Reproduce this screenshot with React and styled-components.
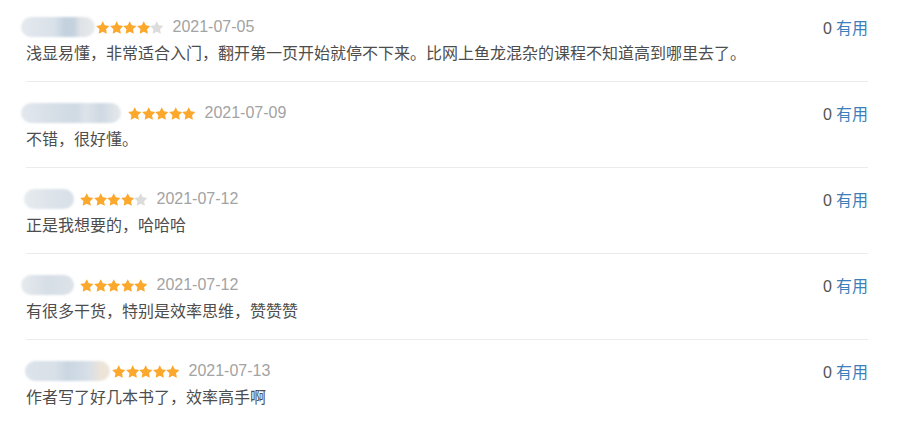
import styled, { createGlobalStyle } from "styled-components";

const GlobalStyle = createGlobalStyle`
  body {
    margin: 0;
    background: #fff;
    font-family: "Liberation Sans", Arial, "Noto Sans CJK SC", sans-serif;
  }
`;

const List = styled.div`
  width: 842px;
  margin-left: 26px;
`;

const Item = styled.div`
  padding: 18px 0 17px;
  border-bottom: 1px solid #ececec;

  &:first-child {
    padding-top: 14px;
  }

  &:last-child {
    border-bottom: none;
  }
`;

const Header = styled.div`
  display: flex;
  align-items: center;
  height: 26px;
`;

const Meta = styled.div`
  display: flex;
  align-items: center;
  flex: 1;
`;

const Name = styled.div`
  width: ${(p) => p.$w}px;
  height: 20px;
  margin-left: ${(p) => p.$offset}px;
  border-radius: 10px;
  background: ${(p) => p.$bg};
  filter: blur(1px);
`;

const Stars = styled.div`
  display: flex;
  margin-left: ${(p) => p.$gap}px;
`;

const DateText = styled.span`
  margin-left: 9px;
  font-size: 16px;
  color: #a3a3a3;
`;

const Useful = styled.div`
  font-size: 16px;
  color: #3d7fb8;

  b {
    font-weight: normal;
    color: #555;
    margin-right: 4px;
  }
`;

const Content = styled.div`
  font-family: "Noto Sans CJK SC", sans-serif;
  font-size: 16px;
  line-height: 24px;
  color: #4d4d4d;
`;

function Star({ on }) {
  return (
    <svg width="13.5" height="13" viewBox="2.3 1.3 19.4 18.5">
      <polygon
        points="12,1.5 14.94,7.45 21.51,8.41 16.76,13.05 17.88,19.59 12,16.5 6.12,19.59 7.24,13.05 2.49,8.41 9.06,7.45"
        fill={on ? "#fba82c" : "#dcdcdc"}
      />
    </svg>
  );
}

const reviews = [
  {
    name: { w: 74, offset: -5, gap: 1, bg: "linear-gradient(90deg,#e4e9ee 0%,#d9e1e9 45%,#c3d1de 60%,#c6d3df 72%,#e0e3e6 80%,#e7eaed 100%)" },
    stars: 4,
    date: "2021-07-05",
    text: "浅显易懂，非常适合入门，翻开第一页开始就停不下来。比网上鱼龙混杂的课程不知道高到哪里去了。",
  },
  {
    name: { w: 100, offset: -5, gap: 7, bg: "linear-gradient(90deg,#e3e8ee 0%,#d7dfe7 30%,#d0dae4 55%,#dde4ea 65%,#cfd9e3 80%,#e6e9ec 100%)" },
    stars: 5,
    date: "2021-07-09",
    text: "不错，很好懂。",
  },
  {
    name: { w: 50, offset: -2, gap: 6, bg: "linear-gradient(90deg,#e7ebef 0%,#dde4ea 50%,#d8e0e8 100%)" },
    stars: 4,
    date: "2021-07-12",
    text: "正是我想要的，哈哈哈",
  },
  {
    name: { w: 53, offset: -5, gap: 6, bg: "linear-gradient(90deg,#e6eaee 0%,#d6dee6 50%,#dde3e9 100%)" },
    stars: 5,
    date: "2021-07-12",
    text: "有很多干货，特别是效率思维，赞赞赞",
  },
  {
    name: { w: 85, offset: -1, gap: 2, bg: "linear-gradient(90deg,#dde4eb 0%,#d8e0e8 35%,#c9d6e2 50%,#d7dfe7 75%,#ede4d8 90%,#efe6da 100%)" },
    stars: 5,
    date: "2021-07-13",
    text: "作者写了好几本书了，效率高手啊",
  },
];

export default function App() {
  return (
    <>
      <GlobalStyle />
      <List>
        {reviews.map((r, i) => (
          <Item key={i}>
            <Header>
              <Meta>
                <Name $w={r.name.w} $offset={r.name.offset} $bg={r.name.bg} />
                <Stars $gap={r.name.gap}>
                  {[0, 1, 2, 3, 4].map((s) => (
                    <Star key={s} on={s < r.stars} />
                  ))}
                </Stars>
                <DateText>{r.date}</DateText>
              </Meta>
              <Useful>
                <b>0</b>有用
              </Useful>
            </Header>
            <Content>{r.text}</Content>
          </Item>
        ))}
      </List>
    </>
  );
}
